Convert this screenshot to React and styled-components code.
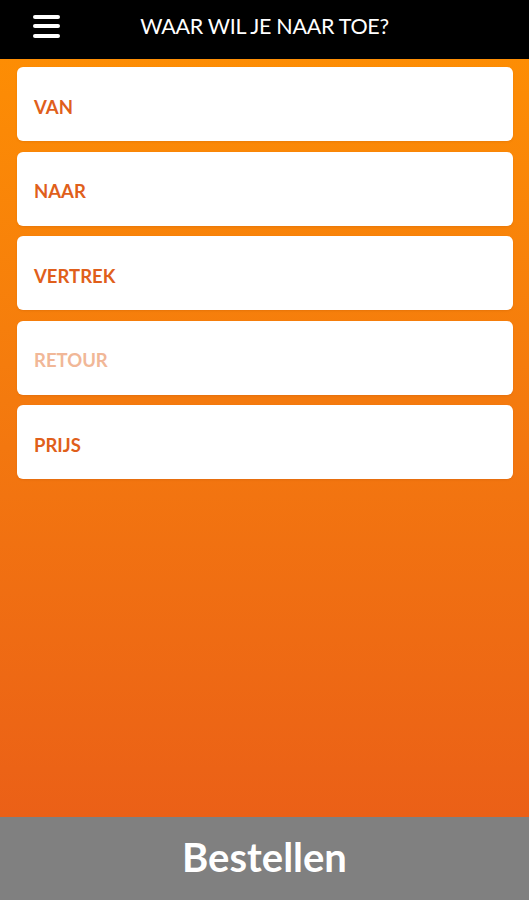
import React from 'react';
import styled, { createGlobalStyle } from 'styled-components';

const GlobalStyle = createGlobalStyle`
  html, body {
    margin: 0;
    padding: 0;
    height: 100%;
  }
  body {
    font-family: Lato, "Open Sans", sans-serif;
  }
  #root {
    height: 100%;
  }
`;

const Screen = styled.div`
  width: 529px;
  height: 900px;
  display: flex;
  flex-direction: column;
  overflow: hidden;
`;

const TopBar = styled.header`
  height: 59px;
  flex-shrink: 0;
  background: #000;
  display: flex;
  align-items: center;
`;

const MenuButton = styled.button`
  width: 27px;
  height: 23px;
  margin-left: 33px;
  margin-top: -7px;
  padding: 0;
  border: none;
  background: transparent;
  display: flex;
  flex-direction: column;
  justify-content: space-between;
  cursor: pointer;
`;

const MenuBar = styled.span`
  display: block;
  height: 4px;
  border-radius: 2px;
  background: #fff;
`;

const Title = styled.h1`
  flex: 1;
  margin: 0 0 7px 0;
  padding-right: 60px;
  text-align: center;
  color: #fff;
  font-size: 21.5px;
  font-weight: 400;
  letter-spacing: -0.3px;
`;

const Body = styled.main`
  flex: 1;
  background: linear-gradient(180deg, #fd8d04 0%, #f47a0e 45%, #eb6017 100%);
  padding: 8px 16px 0 17px;
  display: flex;
  flex-direction: column;
  gap: 10.5px;
`;

const Field = styled.div`
  height: 74px;
  background: #fff;
  border-radius: 6px;
  display: flex;
  align-items: center;
  padding-left: 17px;
  padding-top: 5px;
  box-sizing: border-box;
  box-shadow: 0 1px 2px rgba(150, 60, 0, 0.15);
`;

const Label = styled.span`
  font-size: 18.5px;
  font-weight: 700;
  color: ${(p) => (p.$muted ? '#f1b797' : '#e05f1b')};
`;

const OrderBar = styled.button`
  height: 83px;
  flex-shrink: 0;
  border: none;
  background: #808080;
  color: #fff;
  font-family: Lato, sans-serif;
  font-size: 40px;
  font-weight: 700;
  display: flex;
  align-items: center;
  justify-content: center;
  padding: 0 0 4px 0;
  cursor: pointer;
`;

const fields = [
  { label: 'VAN' },
  { label: 'NAAR' },
  { label: 'VERTREK' },
  { label: 'RETOUR', muted: true },
  { label: 'PRIJS' },
];

export default function App() {
  return (
    <>
      <GlobalStyle />
      <Screen>
        <TopBar>
          <MenuButton aria-label="menu">
            <MenuBar />
            <MenuBar />
            <MenuBar />
          </MenuButton>
          <Title>WAAR WIL JE NAAR TOE?</Title>
        </TopBar>
        <Body>
          {fields.map((f) => (
            <Field key={f.label}>
              <Label $muted={f.muted}>{f.label}</Label>
            </Field>
          ))}
        </Body>
        <OrderBar>Bestellen</OrderBar>
      </Screen>
    </>
  );
}
